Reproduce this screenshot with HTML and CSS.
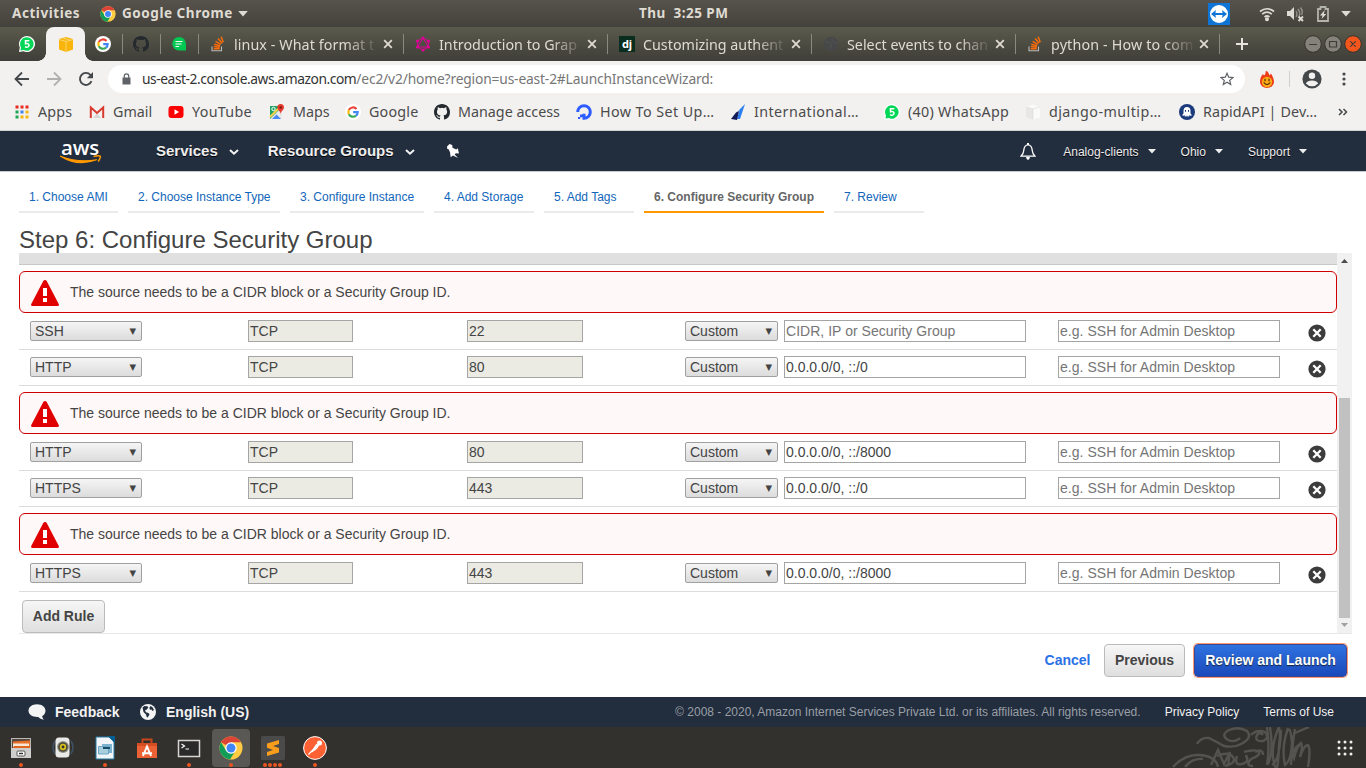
FILE: index.html
```html
<!DOCTYPE html>
<html lang="en">
<head>
<meta charset="utf-8">
<title>Launch Instance Wizard</title>
<link rel="stylesheet" href="styles.css">
</head>
<body>
<svg class="defs" width="0" height="0">
  <symbol id="chrome" viewBox="0 0 48 48"><circle cx="24" cy="24" r="23" fill="#fc4"/><path d="M24 24 4 12.5A23 23 0 0 1 44 12.5H24Z" fill="#db4437"/><path d="M4 12.5A23 23 0 0 0 22 47L33 29 24 24 14 29Z" fill="#0f9d58"/><circle cx="24" cy="24" r="11.5" fill="#fff"/><circle cx="24" cy="24" r="9" fill="#4285f4"/></symbol>
  <symbol id="google" viewBox="0 0 48 48"><circle cx="24" cy="24" r="24" fill="#fff"/><g fill="none" stroke-width="6.5"><path d="M34.5 15A14 14 0 0 0 11.5 18" stroke="#ea4335"/><path d="M11.5 18a14 14 0 0 0 0 12.500" stroke="#fbbc05"/><path d="M11.500 30.500A14 14 0 0 0 33 35" stroke="#34a853"/><path d="M33 35a14 14 0 0 0 5-10.500H24.500" stroke="#4285f4"/></g></symbol>
  <symbol id="github" viewBox="0 0 16 16"><path d="M8 0C3.580 0 0 3.580 0 8c0 3.540 2.290 6.530 5.470 7.590.4.070.55-.17.55-.38v-1.490c-2.230.48-2.690-.95-2.690-.95-.36-.92-.89-1.170-.89-1.170-.73-.5.060-.49.060-.49.8.060 1.230.83 1.230.83.71 1.220 1.870.87 2.330.66.070-.52.280-.87.510-1.070-1.780-.2-3.640-.89-3.640-3.950 0-.87.310-1.590.82-2.150-.08-.2-.36-1.020.08-2.120 0 0 .67-.21 2.200.82a7.600 7.600 0 0 1 4 0c1.530-1.040 2.200-.82 2.200-.82.440 1.100.160 1.920.080 2.120.51.560.82 1.270.82 2.150 0 3.070-1.870 3.750-3.650 3.950.29.250.54.730.54 1.480v2.190c0 .21.150.46.550.38A8 8 0 0 0 16 8c0-4.420-3.580-8-8-8Z" fill="#24292e"/></symbol>
  <symbol id="whatsapp" viewBox="0 0 16 16"><path d="M8 0a8 8 0 1 1-3.500 15.200L0 16l.8-4.500A8 8 0 0 1 8 0Z" fill="#fff"/><path d="M8 1.200A6.800 6.800 0 1 1 4.600 14L1.500 14.500 2 11.400A6.800 6.800 0 0 1 8 1.200Z" fill="#00d757"/><path d="M10.300 4.700H6.500V7.700C9 7 10.200 8 10 9.500c-.2 1.900-2.600 2-4 1.200" fill="none" stroke="#fff" stroke-width="1.500"/></symbol>
  <symbol id="stack" viewBox="0 0 14 16"><path d="M1 10.500v4.300h9.500v-4.300" fill="none" stroke="#bcbbbb" stroke-width="1.100"/><path d="M2.700 12.700h6M2.800 10.600l6 .6M3.300 8.200l5.800 1.500M4.600 5.400l5.200 3M7.100 2.600l4 4.600M10.100.7l2.200 5.500" stroke="#fb6d0a" stroke-width="1.500"/></symbol>
  <symbol id="close" viewBox="0 0 10 10"><path d="m1.200 1.200 7.600 7.600m0-7.600L1.200 8.800" stroke="#dfdbd2" stroke-width="1.800"/></symbol>
  <symbol id="down" viewBox="0 0 8 5"><path d="M0 0h8L4 4.600Z" fill="currentColor"/></symbol>
  <symbol id="alert" viewBox="0 0 28 26"><path d="M12.400.8Q14-.8 15.600.8L28 24.500q0 1.500-1.500 1.500h-25Q0 26 0 24.500Z" fill="#e00000"/><path d="M12 8h4v8h-4Zm0 10h4v4h-4Z" fill="#fff"/></symbol>
  <symbol id="remove" viewBox="0 0 18 18"><circle cx="9" cy="9" r="8.600" fill="#3c3c3c"/><path d="m5.300 5.300 7.400 7.400m0-7.400-7.400 7.400" stroke="#fff" stroke-width="2.300"/></symbol>
  <symbol id="chev" viewBox="0 0 10 8"><path d="m1 2 4 3.700L9 2" fill="none" stroke="#f2f2f2" stroke-width="2"/></symbol>
</svg>

<header class="topbar">
  <span class="t-act">Activities</span>
  <svg class="i16"><use href="#chrome"/></svg>
  <span class="t-app">Google Chrome</span>
  <svg class="t-down"><use href="#down"/></svg>
  <span class="t-clock">Thu&nbsp; 3:25 PM</span>
  <svg class="t-team" viewBox="0 0 22 22"><path fill="#0e74d6" d="M0 0h22v22H0z"/><circle cx="11" cy="11" r="9" fill="#fff"/><path d="m3 11 5-4-.6 3h7.200L14 7l5 4-5 4 .6-3H7.400l.6 3Z" fill="#0e74d6"/></svg>
  <svg class="t-wifi" viewBox="0 0 16 16" fill="none" stroke="#dfdbd2" stroke-width="1.700"><path d="M1 5.500q7-5.500 14 0M3.200 8.200q4.800-4 9.600 0M5.500 11q2.500-2 5 0"/><circle cx="8" cy="13.300" r="1.200" fill="#dfdbd2"/></svg>
  <svg class="t-vol" viewBox="0 0 17 16"><path d="M0 5h3l4-4v13l-4-4H0Z" fill="#dfdbd2"/><path d="M9 5q2 3 0 6M11 3q3 4 1 7M13.500 1.500q3 4 1 7.500" fill="none" stroke="#98958d" stroke-width="1.300"/><path d="m11.500 10.500 4.500 4.500m0-4.500L11.500 15" stroke="#dfdbd2" stroke-width="1.900"/></svg>
  <svg class="t-bat" viewBox="0 0 12 16"><path d="M1 3h2.500V1h5v2H11v12H1Z" fill="none" stroke="#b5b2aa" stroke-width="1.800"/><path d="M7.800 4 3 9.500h2.500L4.500 13 9.300 8H6.800Z" fill="#dfdbd2"/></svg>
  <svg class="t-down2"><use href="#down"/></svg>
</header>

<nav class="tabs">
  <div class="pin wa"><svg><use href="#whatsapp"/></svg></div>
  <div class="pin active"><svg viewBox="0 0 16 16"><path d="M1 3 8 1l7 2v10.500L8 16l-7-2.500Z" fill="#f9b50b"/><path d="M1 3.500 8 5.500l7-2M8 5.500V16M5 2l7 2.200" fill="none" stroke="#fbdc86" stroke-width=".8"/></svg></div>
  <div class="pin sep"><svg><use href="#google"/></svg></div>
  <div class="pin sep"><svg><use href="#github"/></svg></div>
  <div class="pin sep"><svg class="i14" viewBox="0 0 14 14"><path d="M7 0a7 7 0 0 1 7 7v6.500H7A6.750 6.750 0 0 1 7 0Z" fill="#00c853"/><path d="M3.500 4.500h7M3.500 7h6M3.500 9.500h3.500" stroke="#fff" stroke-width="1.200"/></svg></div>
  <div class="tab sep"><svg class="fav"><use href="#stack"/></svg><span class="tt s1">linux - What format t</span><svg class="x"><use href="#close"/></svg></div>
  <div class="tab sep"><svg class="fav" viewBox="0 0 16 16"><path d="m8 2 5.400 3v6L8 14l-5.400-3V5ZM8 2l5.400 9H2.600Z" fill="none" stroke="#e10098" stroke-width="1"/><g fill="#e10098"><circle cx="8" cy="2" r="1.600"/><circle cx="13.400" cy="5" r="1.600"/><circle cx="13.400" cy="11" r="1.600"/><circle cx="8" cy="14" r="1.600"/><circle cx="2.600" cy="11" r="1.600"/><circle cx="2.600" cy="5" r="1.600"/></g></svg><span class="tt s2">Introduction to Grap</span><svg class="x"><use href="#close"/></svg></div>
  <div class="tab sep"><span class="fav dj">dj</span><span class="tt s3">Customizing authent</span><svg class="x"><use href="#close"/></svg></div>
  <div class="tab sep"><svg class="fav" viewBox="0 0 16 16"><circle cx="8" cy="8" r="7.200" fill="#46484a"/><path d="M2 6q3-1 5 1t1 5M10 2q-2 3 1 4t3 2" fill="none" stroke="#4f504e" stroke-width="1.500"/></svg><span class="tt s4">Select events to chan</span><svg class="x"><use href="#close"/></svg></div>
  <div class="tab sep"><svg class="fav"><use href="#stack"/></svg><span class="tt s5">python - How to com</span><svg class="x"><use href="#close"/></svg></div>
  <div class="win">
    <svg class="plus" viewBox="0 0 12 12"><path d="M6 0v12M0 6h12" stroke="#e6e3dc" stroke-width="2"/></svg>
    <svg class="wbtns" viewBox="0 0 60 20"><g stroke="#34332e"><circle cx="10" cy="10" r="8.300" fill="#84827a"/><circle cx="30" cy="10" r="8.300" fill="#84827a"/><circle cx="50" cy="10" r="8.300" fill="#f2561d"/></g><path d="M6 10.500h8M26.500 7.500h7v5.500h-7ZM47.300 7.300l5.400 5.400m0-5.400-5.400 5.400" fill="none" stroke="#3d3c37" stroke-width="1.200"/></svg>
  </div>
</nav>

<div class="toolbar">
  <svg class="nav-i n1" viewBox="0 0 16 16"><path d="M15 8H2m6-6.500L1.500 8 8 14.500" fill="none" stroke="#45484a" stroke-width="1.800"/></svg>
  <svg class="nav-i n2" viewBox="0 0 16 16"><path d="M1 8h13M8 1.500 14.500 8 8 14.500" fill="none" stroke="#b1b0af" stroke-width="1.800"/></svg>
  <svg class="nav-i n3" viewBox="0 0 16 16"><path d="M13.500 10.200A6 6 0 1 1 12.500 4L14 5.500" fill="none" stroke="#45484a" stroke-width="1.900"/><path d="M15 1v6.200H8.800Z" fill="#45484a"/></svg>
  <div class="omni">
    <svg class="lock" viewBox="0 0 9 12"><path d="M.5 4.500h8V11.500h-8Z" fill="#5f6368"/><path d="M2.300 5V3a2.200 2.200 0 0 1 4.400 0v2" fill="none" stroke="#5f6368" stroke-width="1.200"/></svg>
    <span class="url"><b>us-east-2.console.aws.amazon.com</b>/ec2/v2/home?region=us-east-2#LaunchInstanceWizard:</span>
    <svg class="star" viewBox="0 0 14 14"><path d="m7 1.300 1.700 3.900 4.200.4-3.200 2.800 1 4.100L7 10.300l-3.700 2.200 1-4.100L1.100 5.600l4.200-.4Z" fill="none" stroke="#5f6368" stroke-width="1.200"/></svg>
  </div>
  <svg class="fire" viewBox="0 0 14 18"><path d="M7 1q2 2 2.500 4.500L11 3.500q3 5 3 8.500a7 6 0 0 1-14 0Q0 7 3 4l1 1.500Q6 4 5.500 1.500Z" fill="#ef3c17"/><circle cx="7" cy="12" r="5.200" fill="#fbab18"/><path d="M5 8.800v2.500M9 8.800v2.500M3.700 12.500q3.300 4 6.600 0" fill="none" stroke="#4b2207" stroke-width="1.100"/></svg>
  <i class="bar"></i>
  <svg class="user" viewBox="0 0 20 20"><circle cx="10" cy="10" r="9.600" fill="#45484a"/><circle cx="10" cy="6.800" r="3.200" fill="#f2f1f0"/><path d="M3.800 14.500q1.500-3 6.200-3t6.200 3Q13.500 17.300 10 17.300T3.800 14.500Z" fill="#f2f1f0"/></svg>
  <svg class="kebab" viewBox="0 0 4 14" fill="#45484a"><circle cx="2" cy="2" r="1.600"/><circle cx="2" cy="7" r="1.600"/><circle cx="2" cy="12" r="1.600"/></svg>
</div>

<div class="marks">
  <a><svg viewBox="0 0 16 16"><path d="M1.500 1.500h3v3h-3zM6.500 1.500h3v3h-3zM11.500 1.500h3v3h-3z" fill="#ea2a1e"/><path d="M1.500 6.500h3v3h-3z" fill="#21a453"/><path d="M6.500 6.500h3v3h-3z" fill="#3f83f2"/><path d="M11.500 6.500h3v3h-3zM6.500 11.500h3v3h-3zM11.500 11.500h3v3h-3z" fill="#f6b70a"/><path d="M1.500 11.500h3v3h-3z" fill="#21a453"/></svg><span class="m1">Apps</span></a>
  <a><svg viewBox="0 0 16 16"><path d="M1 3h14v11H1z" fill="#f4f2f1"/><path d="M4 14 8 9.500l4 4.500Z" fill="#d8d5d3"/><path d="M1.800 14V3.500L8 9l6.200-5.500V14" fill="none" stroke="#d93a2e" stroke-width="2"/></svg><span class="m2">Gmail</span></a>
  <a><svg viewBox="0 0 16 16"><rect x=".5" y="2" width="15" height="12" rx="3" fill="#f00"/><path d="m6.500 5.300 4.500 2.700-4.500 2.700Z" fill="#fff"/></svg><span class="m3">YouTube</span></a>
  <a><svg viewBox="0 0 16 16"><path d="M1 2h12v13H1z" fill="#1fa463"/><path d="M1 15 13 3v12Z" fill="#e9e9e8"/><path d="m3 15 4.500-4.500L12 15Z" fill="#4a89f3"/><path d="m1 13 10-10" stroke="#fdd24a" stroke-width="1.800"/><circle cx="4.500" cy="5" r="1.700" fill="none" stroke="#fff"/><path d="M11.700 0A3.500 3.500 0 0 1 15 3.500C15 6 12.300 6.500 11.700 10 11 6.500 8.300 6 8.300 3.500A3.500 3.500 0 0 1 11.700 0Z" fill="#e53b2f"/><circle cx="11.700" cy="3.500" r="1.200" fill="#7b1b13"/></svg><span class="m4">Maps</span></a>
  <a><svg><use href="#google"/></svg><span class="m5">Google</span></a>
  <a><svg><use href="#github"/></svg><span class="m6">Manage access</span></a>
  <a><svg viewBox="0 0 16 16"><path d="M1.700 8a6.300 6.300 0 1 1 6.300 6.300V9.800" fill="none" stroke="#2c5bff" stroke-width="3"/><path d="M4 10.500h3v2.800H4zM2 13h2.200v2H2z" fill="#2c5bff"/></svg><span class="m7">How To Set Up…</span></a>
  <a><svg viewBox="0 0 16 16"><path d="m15 0-5 15H7L9.500 6 6 9Z" fill="#2b7fee"/><path d="m1 15 5-6.500 3-1.500-2 9Z" fill="#121b57"/></svg><span class="m8">International…</span></a>
  <a><svg><use href="#whatsapp"/></svg><span class="m9">(40) WhatsApp</span></a>
  <a><svg viewBox="0 0 16 16"><path d="M1 3 8 .5 15 3v10.500L8 15.700 1 13.500Z" fill="#fafaf8"/><path d="M1 3 8 5v10.700L1 13.500Z" fill="#e7e7e3"/><path d="m1 3 7 2 7-2M8 5v10.500" stroke="#dededa" fill="none" stroke-width=".7"/></svg><span class="m10">django-multip…</span></a>
  <a><svg viewBox="0 0 16 16"><circle cx="8" cy="8" r="8" fill="#1c3b7c"/><path d="M4.500 7a3.500 4 0 0 1 7 0v2.500l1.500 1.700-1.500.5-1-.7-.5 2-1.200-1.500L8 13.300 7.200 11.500 6 13l-.5-2-1 .7L3 11.200 4.500 9.500Z" fill="#fff"/><path d="M6.500 6v1.800M9.500 6v1.800" stroke="#1c3b7c"/></svg><span class="m11">RapidAPI | Dev…</span></a>
  <svg class="more" viewBox="0 0 10 8"><path d="m1 1 3 3-3 3m4.500-6 3 3-3 3" fill="none" stroke="#45484a" stroke-width="1.500"/></svg>
</div>

<div class="aws">
  <div class="logo"><span>aws</span><svg viewBox="0 0 42 10"><path d="M.5 1.200Q18 12 36.500 4.800 18 8 .5 1.200Z" fill="#f90" stroke="#f90" stroke-width="1.200" stroke-linejoin="round"/><path d="M33.500 1.500q6-1.300 6.700-.3t-2 5.300" fill="none" stroke="#f90" stroke-width="1.600"/></svg></div>
  <span class="big">Services</span><svg class="chev c1"><use href="#chev"/></svg>
  <span class="big">Resource Groups</span><svg class="chev c2"><use href="#chev"/></svg>
  <svg class="pinic" viewBox="0 0 14 14"><path d="M3.500 0 6.200 1 6.500 3.700l3.700 1.800 1.600-1.200L13 9.500l-3.200-.2L8.700 10.500 12 14 7 11.600 4.700 13.200 4 8.300 2.600 5.300 1.300 5 1 2.500Z" fill="#fff"/></svg>
  <div class="awsr">
    <svg class="bell" viewBox="0 0 16 17"><path d="M8 1.800c3.500 0 4 2.500 4.300 6q.2 3 2.700 5.400H1Q3.500 10.800 3.700 7.800C4 4.300 4.500 1.800 8 1.800Z" fill="none" stroke="#fff" stroke-width="1.300"/><path d="M6 14h4q-.5 3-2 3t-2-3ZM7 0h2v2H7Z" fill="#fff"/></svg>
    <span>Analog-clients</span><svg class="car"><use href="#down"/></svg>
    <span>Ohio</span><svg class="car"><use href="#down"/></svg>
    <span>Support</span><svg class="car"><use href="#down"/></svg>
  </div>
</div>

<main>
  <nav class="steps">
    <a>1. Choose AMI</a><a>2. Choose Instance Type</a><a>3. Configure Instance</a><a>4. Add Storage</a><a>5. Add Tags</a><a class="on">6. Configure Security Group</a><a>7. Review</a>
  </nav>
  <h1>Step 6: Configure Security Group</h1>
  <section class="panel">
    <div class="rules">
      <div class="head"></div>
      <div class="alert"><svg><use href="#alert"/></svg>The source needs to be a CIDR block or a Security Group ID.</div>
      <div class="row first"><div class="sel">SSH<i>▼</i></div><div class="inp off">TCP</div><div class="inp off">22</div><div class="sel">Custom<i>▼</i></div><div class="inp ph">CIDR, IP or Security Group</div><div class="inp ph">e.g. SSH for Admin Desktop</div><svg><use href="#remove"/></svg></div>
      <div class="row"><div class="sel">HTTP<i>▼</i></div><div class="inp off">TCP</div><div class="inp off">80</div><div class="sel">Custom<i>▼</i></div><div class="inp">0.0.0.0/0, ::/0</div><div class="inp ph">e.g. SSH for Admin Desktop</div><svg><use href="#remove"/></svg></div>
      <div class="alert"><svg><use href="#alert"/></svg>The source needs to be a CIDR block or a Security Group ID.</div>
      <div class="row first"><div class="sel">HTTP<i>▼</i></div><div class="inp off">TCP</div><div class="inp off">80</div><div class="sel">Custom<i>▼</i></div><div class="inp">0.0.0.0/0, ::/8000</div><div class="inp ph">e.g. SSH for Admin Desktop</div><svg><use href="#remove"/></svg></div>
      <div class="row"><div class="sel">HTTPS<i>▼</i></div><div class="inp off">TCP</div><div class="inp off">443</div><div class="sel">Custom<i>▼</i></div><div class="inp">0.0.0.0/0, ::/0</div><div class="inp ph">e.g. SSH for Admin Desktop</div><svg><use href="#remove"/></svg></div>
      <div class="alert"><svg><use href="#alert"/></svg>The source needs to be a CIDR block or a Security Group ID.</div>
      <div class="row first"><div class="sel">HTTPS<i>▼</i></div><div class="inp off">TCP</div><div class="inp off">443</div><div class="sel">Custom<i>▼</i></div><div class="inp">0.0.0.0/0, ::/8000</div><div class="inp ph">e.g. SSH for Admin Desktop</div><svg><use href="#remove"/></svg></div>
      <div class="btn add">Add Rule</div>
    </div>
    <div class="scroll">
      <svg viewBox="0 0 7 4"><path d="M0 4h7L3.500 0Z" fill="#4a4a4a"/></svg>
      <div class="thumb"></div>
      <svg viewBox="0 0 7 4"><path d="M0 0h7L3.500 4Z" fill="#a0a0a0"/></svg>
    </div>
  </section>
  <div class="actions"><a>Cancel</a><div class="btn prev">Previous</div><div class="btn go">Review and Launch</div></div>
</main>

<footer class="foot">
  <svg class="bubble" viewBox="0 0 18 16"><path d="M9 .3c5 0 8.500 2.900 8.500 6.500 0 2.500-1.500 4.300-3.300 5.300.1 1.500.7 2.600 1.600 3.600-2.500-.3-4.300-1.300-5.400-2.700C4.500 13.300.5 10.700.5 6.800.5 3.200 4 .3 9 .3Z" fill="#f4f4f4"/></svg>
  <b class="fb">Feedback</b>
  <svg class="globe" viewBox="0 0 16 16"><circle cx="8" cy="8" r="8" fill="#f4f4f4"/><path d="m2.500 3.500 2-1.500 3 .3.800 1.200-1.500 2-1.800 1 1 1.700 2.500.8 1 1.500-1.800 3-1-.5L6 10.500 3.500 8ZM10.500 2l2 1.300L14 6l-1.500 1-1-1.500-1.500.3L9.300 4Z" fill="#232f3e"/></svg>
  <b>English (US)</b>
  <span class="copy">© 2008 - 2020, Amazon Internet Services Private Ltd. or its affiliates. All rights reserved.</span>
  <span class="pp">Privacy Policy</span><span>Terms of Use</span>
</footer>

<div class="dock">
  <div class="app"><svg viewBox="0 0 24 24"><path d="M2 2h20v20H2z" fill="#b9b7b4"/><path d="M3 3h18v9H3z" fill="#56483e"/><path d="M4 5.500 21 4.500V11H4z" fill="#e8702a"/><path d="M4 7.500h16V12H4z" fill="#f7e6d4"/><path d="M5 10h16v3H3z" fill="#de6421"/><path d="M2 12h20v10H2z" fill="#d0cecc"/><rect x="8" y="15" width="8" height="5" rx="1" fill="#fff" stroke="#555"/><path d="M10 17.500h4" stroke="#333" stroke-width="1.500"/></svg><i></i></div>
  <div class="app"><svg viewBox="0 0 24 24"><path d="M4 5q-4 6 0 13M20 5q4 6 0 13" fill="none" stroke="#3e5267" stroke-width="1.500"/><rect x="4.500" y="1.500" width="14" height="20" rx="3.500" fill="#e9e9e7"/><circle cx="12" cy="11" r="6" fill="#96968f"/><circle cx="12" cy="11" r="4.800" fill="#494936"/><circle cx="12" cy="11" r="3.200" fill="#d8bf1e"/><circle cx="12" cy="11" r="1.400" fill="#333"/></svg></div>
  <div class="app"><svg viewBox="0 0 24 24"><path d="M3 1h13l5 5v17H3z" fill="#f2f6f9" stroke="#237ba8"/><path d="M15 0h7v7Z" fill="#065f93"/><path d="M9 8h10v9H9z" fill="#7bb3d0"/><path d="M5.500 10.500h10V18h-10z" fill="#a9cfdf" stroke="#6ba7c5"/><path d="M10 11h7v2h-7z" fill="#164d68"/></svg><i></i></div>
  <div class="app"><svg viewBox="0 0 24 24"><path d="M7.500 8V3.500h9V8" fill="none" stroke="#c6461c" stroke-width="2"/><path d="M2 7h20v15H2z" fill="#ed6235"/><path d="M2 7h20v3H2z" fill="#d54d20"/><path d="m8 20 4-9.500 4 9.500M7 17.300h10" fill="none" stroke="#fff" stroke-width="1.900"/></svg></div>
  <div class="app"><svg viewBox="0 0 24 24"><path d="M1.500 4.500h21v16h-21z" fill="#2b2a2b" stroke="#d6d5d1" stroke-width="1.500"/><path d="m4.500 8 3 2-3 2M8.500 13h3.500" fill="none" stroke="#fff" stroke-width="1.200"/></svg><i></i></div>
  <div class="app cur"><svg><use href="#chrome"/></svg><i></i></div>
  <div class="app"><svg viewBox="0 0 24 24"><rect width="24" height="24" rx="1.500" fill="#4a4a4a"/><path d="m6 7.500 12-3.500v4l-6 2 6 2v4.500L6 20v-4l6-2-6-2.200Z" fill="#f99d1c"/></svg><span class="dots"><i></i><i></i><i></i><i></i></span></div>
  <div class="app"><svg viewBox="0 0 24 24"><circle cx="12" cy="12" r="11.400" fill="#fd6032" stroke="#fff"/><path d="M5.500 18.500 14 9.500M8.500 16l5-3.500 2-3-2-1Z" stroke="#fff" fill="#fde3d9" stroke-width="1.200"/><circle cx="16.500" cy="7" r="2.500" fill="#fff"/></svg><i></i></div>
  <svg class="scribble" viewBox="0 0 150 41" fill="none" stroke="#5b5955" stroke-width="2.400"><path d="M2 40Q14 27 28 28q17 1 19 12M14 40q7-9 18-8M26 17q4-7 12-6 8 4 15 8 10 2 17-2 12-6 6-13-8-5-18-1-9 5-1 10 7 3 12-2M80 8q6-6 14-3 5 6-2 9-9 1-6-6 3-4 6 0M40 38l7-15 6 14 6-12-2 14M46 29q12-5 16 1t-8 9M66 29q-3 10 5 8t4-9l3 11M73 25q13-3 15 0t-8 7q-6 7 2 7M84 25q8-4 8 3"/><path d="M96 0q3 20 0 38M99 0q4 24-2 37M108 0q-9 20-5 36t5-18q2-12 0-17M110 3q-1 30-9 35M117 1q-7 20-3 37 6-4 7-22-1-12-3-14M124 2q-4 21-1 29 3-12 7-15 2 4-1 14 4-12 8-12 3 4 0 22M120 38q0-16 9-21M124 6l14-6"/></svg>
  <svg class="grid" viewBox="0 0 16 16" fill="#f0efec"><g id="g"><circle cx="2" cy="2" r="1.500"/><circle cx="8" cy="2" r="1.500"/><circle cx="14" cy="2" r="1.500"/></g><use href="#g" y="6"/><use href="#g" y="12"/></svg>
</div>
</body>
</html>
```
FILE: styles.css
```css
* { box-sizing: border-box; }
body { margin: 0; width: 1366px; height: 768px; overflow: hidden; background: #fff; font: 14px "Liberation Sans", Arial, sans-serif; color: #444; white-space: nowrap; }
svg { display: block; flex: none; }
.defs { position: absolute; }

/* desktop top bar */
.topbar { display: flex; align-items: center; height: 27px; padding-left: 12px; background: linear-gradient(#57534c, #44423c); color: #dfdbd2; font: bold 13.5px/27px "Noto Sans", sans-serif; letter-spacing: .55px; }
.t-act { width: 88px; }
.i16 { width: 16px; height: 16px; }
.t-app { width: 116px; margin-left: 6px; }
.t-down { width: 10px; height: 6px; }
.t-clock { width: 960px; padding-left: 391px; letter-spacing: .45px; }
.t-team { width: 22px; height: 22px; }
.t-wifi { width: 16px; height: 16px; margin-left: 29px; }
.t-vol { width: 17px; height: 16px; margin-left: 12px; }
.t-bat { width: 12px; height: 16px; margin-left: 13px; }
.t-down2 { width: 10px; height: 6px; margin-left: 12px; }

/* browser tabs */
.tabs { display: grid; grid-template-columns: 46px 39px 38px 38px 38px 205px 204px 204px 204px 204px 146px; height: 34px; background: linear-gradient(#5a5a4c, #3f3e39); }
.pin { display: flex; align-items: center; justify-content: center; }
.pin svg { width: 16px; height: 16px; }
.pin svg.i14 { width: 14px; height: 14px; }
.pin.sep { padding-right: 2px; }
.wa { padding-left: 8px; }
.active { background: #f2f1f0; border-radius: 8px 8px 0 0; position: relative; }
.active::before, .active::after { content: ""; position: absolute; bottom: 0; width: 8px; height: 8px; }
.active::before { left: -8px; background: radial-gradient(circle at 0 0, transparent 7.5px, #f2f1f0 8px); }
.active::after { right: -8px; background: radial-gradient(circle at 100% 0, transparent 7.5px, #f2f1f0 8px); }
.sep { background: linear-gradient(#8b8a80, #8b8a80) right center / 1px 20px no-repeat; }
.pin:nth-child(3) { background: none; border-right: 0; }
.pin.sep:nth-child(3) { background: linear-gradient(#8b8a80, #8b8a80) right center / 1px 20px no-repeat; }
.tab { display: flex; align-items: center; padding-left: 11px; color: #dfdbd2; font: 14.3px "Noto Sans", sans-serif; }
.fav { width: 16px; height: 16px; }
.dj { background: #092e20; color: #fff; font: bold 11px/15px "Noto Sans", sans-serif; text-align: center; }
.tt { width: 143px; margin-left: 8px; -webkit-mask-image: linear-gradient(90deg, #000 112px, rgba(0, 0, 0, .12) 141px); }
.s1 { letter-spacing: .08px; }
.s5 { letter-spacing: .15px; }
.x { width: 10px; height: 10px; margin-left: 5px; }
.tab:nth-child(6) .x { margin-left: 6px; }
.win { display: flex; align-items: center; }
.plus { width: 12px; height: 12px; margin-left: 16px; }
.wbtns { width: 60px; height: 20px; margin-left: 55px; }

/* address bar */
.toolbar { display: flex; align-items: center; height: 36px; padding-left: 14px; background: #f2f1f0; }
.nav-i { width: 16px; height: 16px; margin-right: 16px; }
.omni { display: flex; align-items: center; width: 1137px; height: 28px; margin-left: -2px; border-radius: 14px; background: #fff; }
.lock { width: 9px; height: 12px; margin-left: 14px; }
.url { width: 1078px; margin: 0 0 2px 11px; font: 13.8px "Noto Sans", sans-serif; color: #767676; letter-spacing: -.16px; }
.url b { font-weight: 400; color: #333; letter-spacing: -.44px; }
.star { width: 14px; height: 14px; }
.fire { width: 14px; height: 18px; margin-left: 15px; }
.bar { width: 1px; height: 16px; margin-left: 15px; background: #cfcecd; }
.user { width: 20px; height: 20px; margin-left: 12px; }
.kebab { width: 4px; height: 14px; margin-left: 20px; }

/* bookmarks */
.marks { display: grid; grid-template-columns: 75px 79px 101px 76px 89px 142px 154px 154px 141px 154px 159px 12px; align-items: center; height: 34px; padding: 0 0 4px 14px; background: #f2f1f0; border-bottom: 1px solid #cfd3cc; font: 14.300px "Noto Sans", sans-serif; color: #4b4b4b; }
.marks a { display: flex; align-items: center; gap: 8px; }
.marks a svg { width: 16px; height: 16px; }
.marks .m1, .marks .m5 { letter-spacing: .2px; }
.marks .m3 { letter-spacing: .3px; }
.marks .m7, .marks .m8 { letter-spacing: .42px; }
.marks .m9 { letter-spacing: .28px; }
.marks .m10 { letter-spacing: .44px; }
.marks .m11 { letter-spacing: .12px; }
.more { width: 10px; height: 8px; }

/* console header */
.aws { display: flex; align-items: center; height: 41px; background: #222d3e; border-bottom: 1px solid #c5cacb; color: #eee; text-shadow: 0 1px 0 #000; }
.logo { width: 42px; height: 34px; margin: 0 54px 0 60px; }
.logo span { display: block; height: 25px; padding-left: 1px; font: 600 20.5px/26px "Open Sans", sans-serif; color: #fff; text-shadow: none; letter-spacing: -.2px; }
.logo svg { width: 42px; height: 10px; margin-top: -4px; }
.big { margin-bottom: 1px; font-weight: bold; font-size: 15px; }
.chev { width: 10px; height: 8px; }
.c1 { margin: 2px 29px 0 11px; }
.c2 { margin: 2px 31px 0 11px; }
.pinic { width: 14px; height: 14px; }
.awsr { display: flex; align-items: center; margin: 1px 0 0 auto; padding-right: 59px; font-size: 12px; }
.bell { width: 16px; height: 17px; margin-right: 27px; }
.car { width: 8px; height: 5px; margin: 0 25px 0 9px; }
.car:last-child { margin-right: 0; }

/* wizard */
main { height: 525px; padding: 10px 14px 0 19px; }
.steps { display: flex; gap: 10px; }
.steps a { height: 31px; padding: 0 10px; border-bottom: 2px solid #eaeaea; font-size: 12px; line-height: 30px; color: #1166bb; }
.steps a:nth-child(1) { width: 99px; }
.steps a:nth-child(2) { width: 152px; }
.steps a:nth-child(3) { width: 134px; }
.steps a:nth-child(4) { width: 100px; }
.steps a:nth-child(5) { width: 90px; }
.steps a:nth-child(6) { width: 180px; }
.steps a:nth-child(7) { width: 90px; }
.steps a.on { border-color: #f90; color: #666; font-weight: bold; }
h1 { margin: 13px 0 0; height: 27px; font-size: 24px; line-height: 27px; font-weight: 400; }
.panel { display: flex; height: 381px; border-bottom: 1px solid #e8e8e8; }
.rules { width: 1318px; }
.head { height: 12px; background: #e0e0e0; border-bottom: 1px solid #c8c8c8; }
.alert { display: flex; align-items: center; height: 42px; margin-top: 6px; padding-left: 11px; border: 1px solid #cc0000; border-radius: 6px; background: #fff8f8; }
.alert svg { width: 28px; height: 26px; margin: 2px 11px 0 0; }
.row { display: grid; grid-template-columns: 218px 219px 218px 99px 274px 250px 18px; align-items: end; height: 36px; padding: 0 0 7px 11px; border-bottom: 1px solid #ddd; }
.row.first { height: 37px; }
.row svg { width: 18px; height: 18px; }
.sel { display: flex; justify-content: space-between; width: 112px; height: 20px; margin-bottom: 1px; padding: 0 5px 0 4px; border: 1px solid #a0a0a0; border-radius: 2px; background: linear-gradient(#f5f5f5, #dcdcdc); line-height: 19px; }
.sel i { font: 8.500px/18px "DejaVu Sans", sans-serif; }
.sel:nth-child(4) { width: 93px; }
.inp { height: 22px; padding-left: 1px; border: 1px solid #a5a5a5; line-height: 21px; }
.inp:nth-child(2) { width: 105px; }
.inp:nth-child(3) { width: 116px; }
.inp:nth-child(5) { width: 242px; }
.inp:nth-child(6) { width: 222px; }
.off { background: #ebebe4; }
.ph { color: #757575; letter-spacing: .03px; }
.row svg { margin-bottom: .5px; }
.btn { height: 33px; border: 1px solid #bbb; border-radius: 4px; background: linear-gradient(#f6f6f6, #dfdfdf); font-weight: bold; line-height: 31px; text-align: center; }
.add { width: 83px; margin: 8px 0 0 3px; }
.scroll { display: flex; flex-direction: column; align-items: center; justify-content: space-between; width: 15px; padding: 6px 0; background: #f1f1f1; }
.scroll svg { width: 7px; height: 4px; }
.thumb { width: 11px; height: 220px; margin: 129px 0 0; background: #c1c1c1; }
.actions { display: flex; justify-content: flex-end; margin-top: 10px; padding-right: 5px; font-weight: bold; }
.actions a { margin-right: 13.500px; line-height: 33px; color: #2a71e4; }
.prev { width: 81px; margin-right: 9px; }
.go { width: 153px; color: #fff; border-color: #3d4690; background: linear-gradient(#2f72e0, #1b49bb); box-shadow: 0 0 0 1px #ff9a73; text-shadow: 0 1px 1px #123; }

/* console footer */
.foot { display: flex; align-items: center; height: 30px; padding-left: 28px; background: #222d3e; color: #f2f2f2; font-size: 12px; }
.foot b { font-size: 14px; }
.bubble { width: 18px; height: 16px; margin-right: 9px; }
.fb { width: 85px; }
.globe { width: 16px; height: 16px; margin-right: 10px; }
.copy { margin-left: auto; color: #999fa5; }
.foot span + span { margin-left: 24px; }
.foot span:last-child { margin-right: 32px; }

/* dock */
.dock { display: flex; height: 41px; background: #33312d; }
.app { position: relative; display: flex; justify-content: center; width: 38px; height: 38px; margin: 2px 0 0 4px; padding-top: 7px; border-radius: 4px; }
.app:first-child { margin-left: 2px; }
.app svg { width: 24px; height: 24px; }
.cur { background: #5a5854; }
.app i { position: absolute; left: 17px; bottom: 0; width: 4px; height: 4px; border-radius: 50%; background: #e95420; }
.dots { position: absolute; left: 9px; bottom: 0; display: flex; gap: 1px; }
.app .dots i { position: static; }
.scribble { width: 150px; height: 41px; margin-left: auto; opacity: .85; }
.grid { width: 16px; height: 16px; margin: 13px 13px 0 16px; }
```
